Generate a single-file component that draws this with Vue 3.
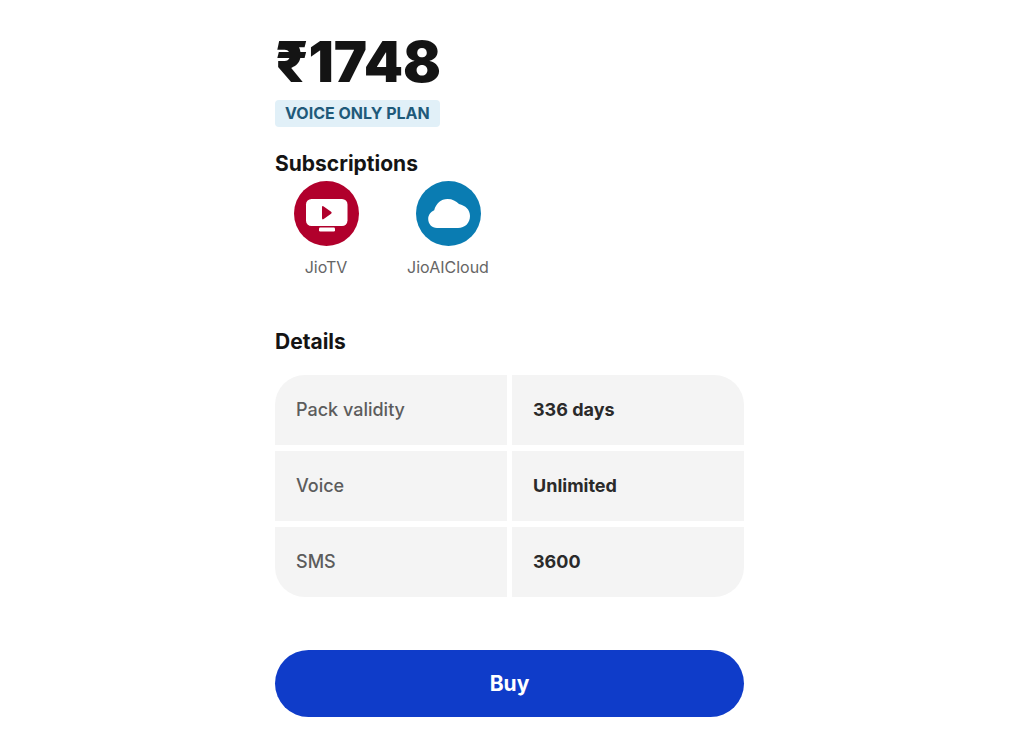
<script setup>
const subscriptions = [
  { name: 'JioTV', kind: 'tv' },
  { name: 'JioAICloud', kind: 'cloud' },
]
const details = [
  { label: 'Pack validity', value: '336 days' },
  { label: 'Voice', value: 'Unlimited' },
  { label: 'SMS', value: '3600' },
]
</script>

<template>
  <main class="page">
    <article class="plan">
      <h1 class="price">₹1748</h1>
      <span class="badge">VOICE ONLY PLAN</span>

      <section class="subscriptions">
        <h2 class="heading">Subscriptions</h2>
        <ul class="apps">
          <li v-for="app in subscriptions" :key="app.name" class="app">
            <svg v-if="app.kind === 'tv'" class="app-icon" viewBox="0 0 65 65" aria-hidden="true">
              <circle cx="32.5" cy="32.5" r="32.5" fill="#b1002c" />
              <rect x="12" y="18" width="41.5" height="27" rx="5.5" fill="#fff" />
              <path d="M28 26.3v10.8q0 1.9 1.7 1l7.4-5.3q1.3-1 0-2l-7.4-5.4q-1.7-1-1.7.9z" fill="#b1002c" />
              <rect x="25" y="46.5" width="16" height="4" rx="1.2" fill="#fff" />
            </svg>
            <svg v-else class="app-icon" viewBox="0 0 65 65" aria-hidden="true">
              <circle cx="32.5" cy="32.5" r="32.5" fill="#0a7cb2" />
              <path d="M21 47C16 47 12.2 43 12.2 38c0-4 2.3-7 6-8.7C20 22.500 25 18 31.5 18c5 0 8.500 2 11.500 5C49.5 24.500 54 28.8 54 35c0 7-5 12-12 12z" fill="#fff" />
            </svg>
            <span class="app-name">{{ app.name }}</span>
          </li>
        </ul>
      </section>

      <section class="details">
        <h2 class="heading">Details</h2>
        <table class="table">
          <tbody>
            <tr v-for="row in details" :key="row.label">
              <th scope="row">{{ row.label }}</th>
              <td>{{ row.value }}</td>
            </tr>
          </tbody>
        </table>
      </section>

      <button class="buy" type="button">Buy</button>
    </article>
  </main>
</template>

<style>
body {
  margin: 0;
  background: #fff;
}
</style>

<style scoped>
.page {
  display: flex;
  justify-content: center;
  padding: 34px 21px 39px 16px;
  font-family: Inter, "Liberation Sans", sans-serif;
  color: #141414;
}
.plan {
  display: flex;
  flex-direction: column;
  align-items: flex-start;
  width: 100%;
  max-width: 469px;
}
.price {
  margin: 0;
  font-size: 56px;
  line-height: 56px;
  font-weight: 900;
}
.badge {
  margin-top: 10px;
  padding: 0 10px;
  border-radius: 4px;
  background: #e1f0f8;
  color: #1f5a7a;
  font-size: 16px;
  line-height: 27px;
  font-weight: 700;
}
.heading {
  margin: 0;
  font-size: 21px;
  line-height: 24px;
  font-weight: 700;
}
.subscriptions {
  margin-top: 25px;
}
.apps {
  display: flex;
  gap: 20px;
  margin: 5px 0 0;
  padding: 0;
  list-style: none;
}
.app {
  display: flex;
  flex-direction: column;
  align-items: center;
  gap: 11px;
  width: 102px;
}
.app-icon {
  display: block;
  width: 65px;
  height: 65px;
}
.app-name {
  color: #666;
  font-size: 16px;
  line-height: 20px;
}
.details {
  width: 100%;
  margin-top: 53px;
}
.table {
  width: calc(100% + 10px);
  margin: 15px -5px -6px;
  table-layout: fixed;
  border-spacing: 5px 6px;
}
th,
td {
  height: 70px;
  padding: 0 21px;
  background: #f4f4f4;
  font-size: 18px;
  line-height: 24px;
  text-align: left;
}
th {
  color: #5c5c5c;
  font-weight: 500;
}
td {
  color: #2a2a2a;
  font-weight: 700;
}
tr:first-child th {
  border-top-left-radius: 30px;
}
tr:first-child td {
  border-top-right-radius: 30px;
}
tr:last-child th {
  border-bottom-left-radius: 30px;
}
tr:last-child td {
  border-bottom-right-radius: 30px;
}
.buy {
  width: 100%;
  height: 67px;
  margin-top: 53px;
  border: 0;
  border-radius: 34px;
  background: #0f3cc9;
  color: #fff;
  font-family: inherit;
  font-size: 21px;
  font-weight: 700;
  cursor: pointer;
}
</style>
